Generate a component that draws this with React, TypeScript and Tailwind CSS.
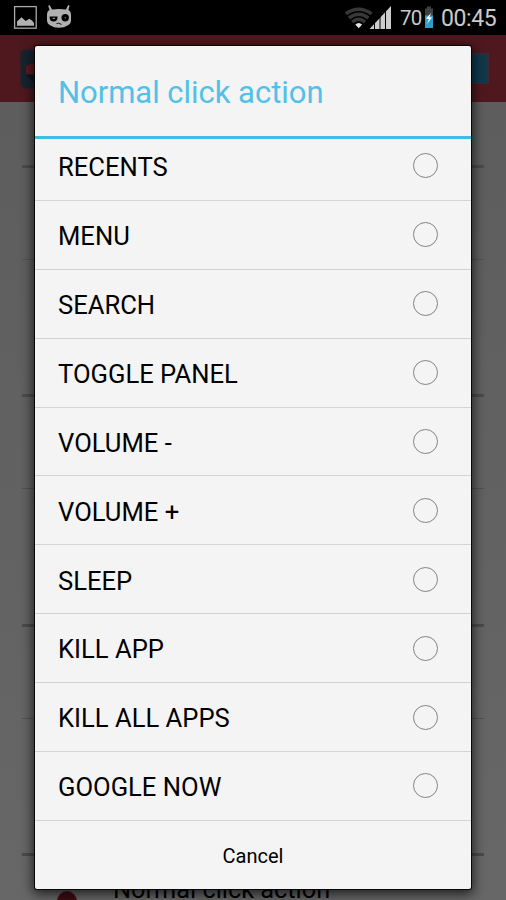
import { useState } from 'react';

const actions = [
  'RECENTS',
  'MENU',
  'SEARCH',
  'TOGGLE PANEL',
  'VOLUME -',
  'VOLUME +',
  'SLEEP',
  'KILL APP',
  'KILL ALL APPS',
  'GOOGLE NOW',
];

function StatusBar() {
  return (
    <div className="flex h-[35px] items-center bg-black text-[#cacaca]">
      <svg width="340" height="35" viewBox="0 0 340 35" className="shrink-0">
        {/* picture notification */}
        <rect x="14.6" y="6.6" width="21.6" height="21.6" fill="none" stroke="#a8a8a8" strokeWidth="1.3" />
        <path d="M17 25.7V21.5L21.5 17.2L25.7 21L29.3 18.8L32 20.6L34 23V25.7Z" fill="#b0b0b0" />
        {/* robot notification */}
        <path
          d="M48.2 5.8L49.6 5L52 9.4Q59 8.4 66 9.4L68.2 5L69.6 5.8L68.4 10Q71 11 71 15V20Q71 24 67.5 25.5Q64.5 27.7 59 27.7Q53.5 27.7 50.5 25.5Q47 24 47 20V15Q47 11 49.6 10Z"
          fill="#b0b0b0"
        />
        <path d="M49.6 16.4H57.6Q57.6 21.6 53.6 21.6Q49.6 21.6 49.6 16.4Z" fill="#000" />
        <circle cx="65.2" cy="17.8" r="3.7" fill="#000" />
        <rect x="64.6" y="17.2" width="1.2" height="1.2" fill="#888" />
        <rect x="52.6" y="17.8" width="2.4" height="1" fill="#b0b0b0" />
        <path d="M56.5 23.6L58.5 23.2L61.5 24.4" fill="none" stroke="#000" strokeWidth="0.9" />
      </svg>
      <svg width="54" height="35" viewBox="340 0 54 35" className="shrink-0">
        <g fill="none" stroke="#383838" strokeWidth="3.5">
          <path d="M345.8 13.8Q358.7 4.8 371.6 13.8" />
          <path d="M349 18Q358.7 10.6 368.4 18" />
          <path d="M352.3 22Q358.7 16.6 365.1 22" />
        </g>
        <path d="M355.3 24.4Q358.7 21.4 362.1 24.4L358.7 28.2Z" fill="#e4e4e4" />
        <path d="M369.5 29L391 6V29Z" fill="#cdcdcd" />
        <path d="M374.5 10V30M380 5V30M385.5 5V30" stroke="#000" strokeWidth="1" />
      </svg>
      <span className="mt-[2px] ml-[6px] w-[23px] shrink-0 text-[20.5px] leading-[35px] tracking-[-0.8px]">70</span>
      <svg width="14" height="35" viewBox="423 0 14 35" className="shrink-0">
        <path d="M427 6.5H431V8.5H433V28H425V8.5H427Z" fill="#404040" />
        <path d="M425 15.5H433V28H425Z" fill="#2f9cc9" />
        <path d="M431.5 12.5L426 18.6L429 19.2L426.7 24.2L432 17.6L429.3 17Z" fill="#fff" />
      </svg>
      <span className="mt-[2px] ml-[4px] text-[23px] leading-[35px] tracking-[-0.4px]">00:45</span>
    </div>
  );
}

function AppHeader() {
  return (
    <div className="flex h-[67px] items-start justify-between bg-[#4f181e] pr-[17px] pl-[20px]">
      <svg width="40" height="40" viewBox="0 0 40 40" className="mt-[14px]">
        <rect x="0.5" y="0.5" width="39" height="39" rx="5" fill="#15242e" />
        <path d="M6 25V17L12 14.5H28V25Z" fill="#611821" />
        <path d="M6 26H32V39L18 38Z" fill="#0c161d" />
      </svg>
      <div className="mt-[18px] h-[31px] w-[70px] border border-[#3f2932] bg-[#12384a]" />
    </div>
  );
}

function PreferenceGroup() {
  return (
    <div className="h-[229.4px] shrink-0 px-[22px]">
      <div className="h-[3px] bg-[#4b4b4b]" />
      <div className="mt-[91px] h-px bg-[#525252]" />
    </div>
  );
}

export default function App() {
  const [selected, setSelected] = useState('');

  return (
    <div className="relative h-[900px] w-[506px] overflow-hidden bg-[#606060] font-[Roboto,sans-serif]">
      <StatusBar />
      <AppHeader />
      <div className="flex h-[798px] flex-col overflow-hidden bg-linear-to-b from-[#5d5d5d] to-[#676767] pt-[63px]">
        <PreferenceGroup />
        <PreferenceGroup />
        <PreferenceGroup />
        <div className="shrink-0 px-[22px]">
          <div className="h-[3px] bg-[#4b4b4b]" />
          <div className="flex items-start">
            <div className="mt-[35px] ml-[35px] h-[20px] w-[20px] rounded-full border border-[#4f1a23] bg-[#3d0d15]" />
            <div className="mt-[18px] ml-[36px] text-[25.3px] leading-[32px] whitespace-nowrap text-black">Normal click action</div>
          </div>
        </div>
      </div>

      {/* dialog over the dimmed settings screen */}
      <div className="absolute top-[46px] left-[35px] flex h-[843px] w-[436px] flex-col overflow-hidden rounded-[2px] bg-[#f4f4f4] shadow-[0_0_0_1px_rgba(0,0,0,0.85),0_3px_12px_2px_rgba(0,0,0,0.7)]">
        <div className="flex h-[90px] shrink-0 items-center pt-[5px] pl-[23px] text-[31px] tracking-[-0.03px] text-[#52c0e8]">
          Normal click action
        </div>
        <div className="h-[3px] shrink-0 bg-[#43bbe4]" />
        <div className="h-[682px] shrink-0 overflow-hidden">
          <div className="-mt-[7px]">
            {actions.map((action) => (
              <button
                key={action}
                onClick={() => setSelected(action)}
                className="flex h-[68.9px] w-full items-center justify-between border-b border-[#d3d3d3] pr-[33px] pl-[23px] text-left text-[25.6px] text-black"
              >
                <span className="pt-[3px]">{action}</span>
                <span className="flex h-[25px] w-[25px] items-center justify-center rounded-full border-[1.3px] border-[#838383]">
                  {selected === action && <span className="h-[13px] w-[13px] rounded-full bg-[#33b5e5]" />}
                </span>
              </button>
            ))}
          </div>
        </div>
        <button className="flex-1 pt-[2px] text-[20px] text-black">Cancel</button>
      </div>
    </div>
  );
}
